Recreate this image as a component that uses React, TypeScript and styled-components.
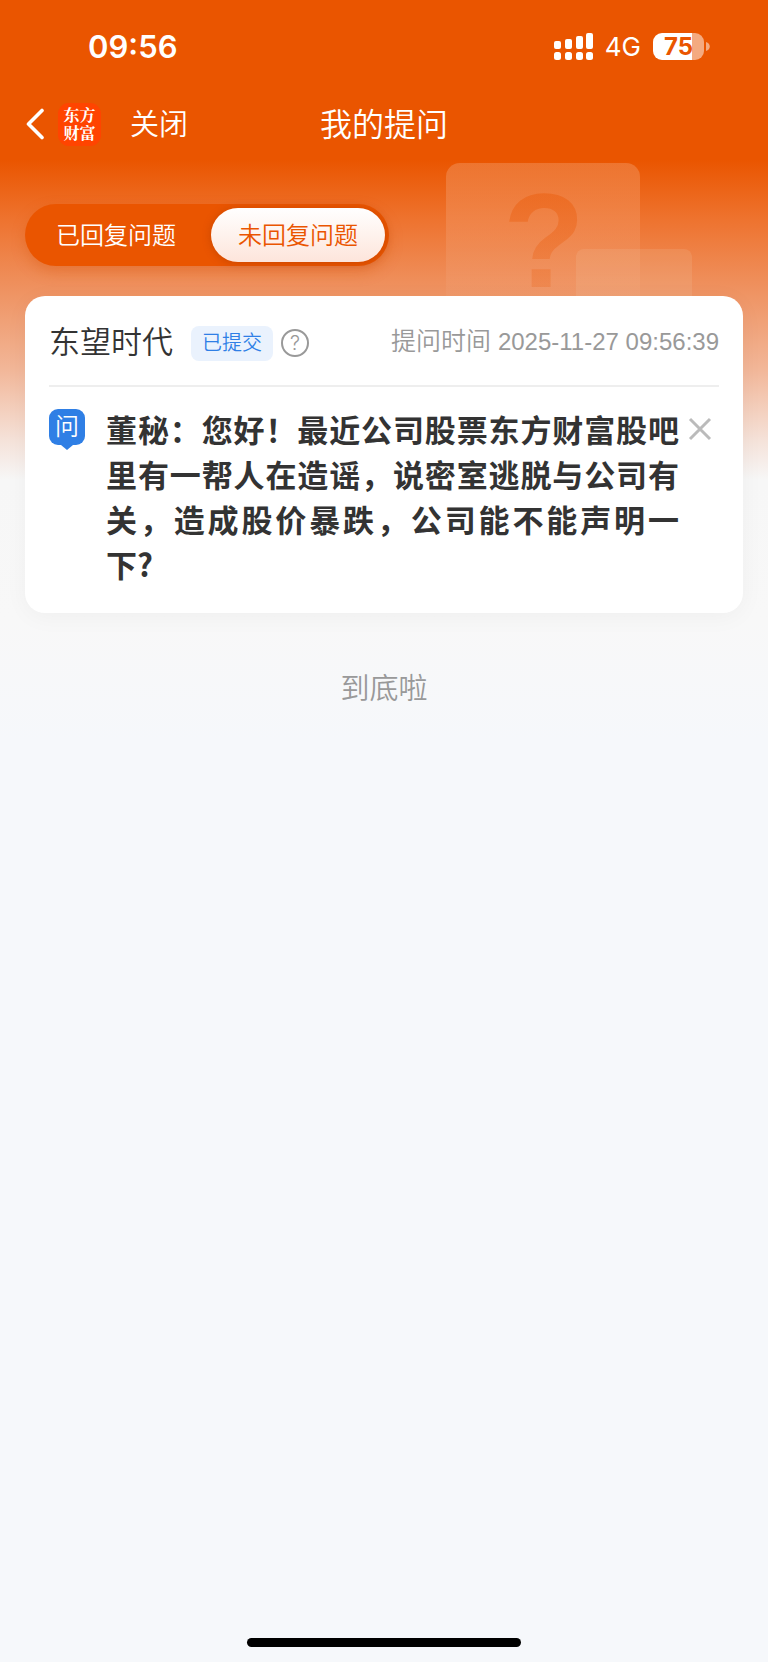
import React from "react";
import styled, { createGlobalStyle } from "styled-components";

const GlobalStyle = createGlobalStyle`
  *, *::before, *::after { box-sizing: border-box; }
  body {
    margin: 0;
    background: #f6f8fb;
    font-family: "Liberation Sans", "Noto Sans CJK SC", sans-serif;
    color: #333;
  }
  button { font: inherit; border: 0; padding: 0; background: none; cursor: pointer; }
  h1, h2, p { margin: 0; }
`;

const Page = styled.div`
  position: relative;
  display: flex;
  flex-direction: column;
  min-height: 100vh;
  font-weight: 350;
  background: #f6f8fb linear-gradient(
    180deg,
    #ea5500 0,
    #ea5500 160px,
    #ee732f 220px,
    #ef9565 296px,
    #f2b799 370px,
    #f5e2d9 440px,
    #f7f7f7 480px,
    #f8f8f8 620px,
    #f6f8fb 740px
  ) no-repeat;
`;

const Backdrop = styled.svg`
  position: absolute;
  top: 163px;
  left: 58%;
  width: 248px;
  height: 160px;
`;

const StatusBar = styled.div`
  display: flex;
  align-items: center;
  justify-content: space-between;
  height: 92px;
  padding: 0 58px 0 88px;
  color: #fff;
  font-family: Inter, sans-serif;
`;

const Clock = styled.time`
  font-size: 31px;
  font-weight: 600;
`;

const StatusIcons = styled.div`
  display: flex;
  align-items: center;
  gap: 12px;
`;

const Network = styled.span`
  font-size: 26px;
  font-weight: 400;
`;

const Battery = styled.div`
  display: flex;
  align-items: center;
  gap: 2px;
`;

const BatteryBody = styled.div`
  width: 51px;
  height: 27px;
  border-radius: 9px;
  text-align: center;
  font-size: 24px;
  font-weight: 700;
  line-height: 27px;
  color: #ea5500;
  background: linear-gradient(90deg, #fff 76%, #f4aa80 76%);
`;

const NavBar = styled.header`
  display: grid;
  grid-template-columns: 1fr auto 1fr;
  align-items: center;
  height: 64px;
  padding: 0 25px;
  color: #fff;
`;

const NavActions = styled.div`
  display: flex;
  align-items: center;
`;

const BackButton = styled.button`
  display: flex;
  margin-right: 13px;
`;

const Logo = styled.span`
  width: 43px;
  height: 43px;
  margin-right: 29px;
  padding: 3px 5px;
  border-radius: 11px;
  background: #ff4400;
  font-family: "Noto Serif CJK SC", "Noto Sans CJK SC", serif;
  font-size: 16px;
  font-weight: 700;
  line-height: 18px;
  text-align: center;
`;

const CloseLink = styled.button`
  padding-top: 2px;
  color: #fff;
  font-size: 29px;
  line-height: 40px;
`;

const Title = styled.h1`
  padding-top: 2px;
  font-size: 32px;
  font-weight: 350;
  line-height: 40px;
`;

const Main = styled.main`
  position: relative;
  display: flex;
  flex-direction: column;
  padding: 48px 25px 0;
`;

const Tabs = styled.div`
  display: flex;
  gap: 8px;
  align-self: flex-start;
  padding: 4px;
  border-radius: 31px;
  background: #ea5500;
  box-shadow: 0 6px 14px rgba(214, 84, 10, 0.35);
`;

const Tab = styled.button<{ $active?: boolean }>`
  width: 174px;
  height: 54px;
  padding-bottom: 3px;
  border-radius: 27px;
  font-size: 24px;
  color: ${(p) => (p.$active ? "#ea5500" : "#fff")};
  background: ${(p) => (p.$active ? "linear-gradient(180deg, #fff, #fde5db)" : "none")};
  box-shadow: ${(p) => (p.$active ? "0 1px 8px rgba(150, 50, 0, 0.4)" : "none")};
`;

const Card = styled.article`
  margin-top: 30px;
  padding: 0 24px 27px;
  border-radius: 20px;
  background: #fff;
  box-shadow: 0 4px 24px rgba(0, 0, 0, 0.04);
`;

const CardHeader = styled.div`
  display: flex;
  align-items: center;
  height: 91px;
  padding-top: 5px;
  border-bottom: 2px solid #eee;
`;

const Company = styled.h2`
  margin-right: 18px;
  font-size: 31px;
  font-weight: 350;
  line-height: 40px;
`;

const Tag = styled.span`
  width: 82px;
  height: 35px;
  border-radius: 8px;
  background: #eaf2fd;
  color: #2f7fe6;
  font-size: 20px;
  line-height: 34px;
  text-align: center;
`;

const HelpButton = styled.button`
  width: 28px;
  height: 28px;
  margin-left: 8px;
  border: 2px solid #999;
  border-radius: 50%;
  color: #999;
  font-family: Inter, sans-serif;
  font-size: 20px;
  line-height: 24px;
`;

const AskedAt = styled.span`
  margin-left: auto;
  padding-bottom: 8px;
  color: #999;
  font-size: 25px;
  white-space: nowrap;

  time { font-size: 24px; }
`;

const Question = styled.div`
  display: flex;
  align-items: flex-start;
  padding-top: 22px;
`;

const AskBadge = styled.span`
  position: relative;
  flex: none;
  width: 36px;
  height: 36px;
  margin-right: 21px;
  border-radius: 9px;
  background: #2f7fe5;
  color: #fff;
  font-size: 24px;
  line-height: 36px;
  text-align: center;

  &::after {
    content: "";
    position: absolute;
    top: 100%;
    left: 50%;
    margin-left: -6px;
    border: 6px solid transparent;
    border-top: 5px solid #2f7fe5;
    border-bottom: 0;
  }
`;

const QuestionText = styled.p`
  flex: 1;
  margin-top: -3px;
  font-family: "Noto Sans CJK SC", sans-serif;
  font-size: 31px;
  font-weight: 700;
  line-height: 45px;
  text-align: justify;
`;

const DismissButton = styled.button`
  display: flex;
  margin: 8px 7px 0 9px;
`;

const EndNote = styled.p`
  margin-top: 56px;
  color: #999;
  font-size: 29px;
  line-height: 40px;
  text-align: center;
`;

const HomeIndicator = styled.div`
  width: 274px;
  height: 9px;
  margin: auto auto 15px;
  border-radius: 5px;
  background: #000;
`;

const BARS = [
  { x: 0, y: 8 },
  { x: 11, y: 6 },
  { x: 22, y: 3 },
  { x: 32, y: 0 },
];

export default function App() {
  return (
    <Page>
      <GlobalStyle />
      <Backdrop viewBox="0 0 248 160" aria-hidden="true">
        <defs>
          <linearGradient id="tile" x1="0" y1="0" x2="0" y2="1">
            <stop offset="0" stopColor="#fff" stopOpacity="0.18" />
            <stop offset="0.75" stopColor="#fff" stopOpacity="0.03" />
          </linearGradient>
          <linearGradient id="mark" x1="0" y1="0" x2="0" y2="1">
            <stop offset="0" stopColor="#ea5500" stopOpacity="0.45" />
            <stop offset="1" stopColor="#ea5500" stopOpacity="0.15" />
          </linearGradient>
        </defs>
        <rect x="1" y="0" width="194" height="180" rx="14" fill="url(#tile)" />
        <text x="58" y="124" fontFamily="Liberation Sans" fontSize="134" fontWeight="700" fill="url(#mark)">?</text>
        <rect x="131" y="86" width="116" height="90" rx="8" fill="#f5d0b0" fillOpacity="0.16" />
      </Backdrop>

      <StatusBar>
        <Clock>09:56</Clock>
        <StatusIcons>
          <svg width="39" height="27" viewBox="0 0 39 27" fill="#fff" aria-hidden="true">
            {BARS.map((b) => (
              <React.Fragment key={b.x}>
                <rect x={b.x} y={b.y} width="7" height={16 - b.y} rx="2" />
                <rect x={b.x} y="19" width="7" height="8" rx="2.5" />
              </React.Fragment>
            ))}
          </svg>
          <Network>4G</Network>
          <Battery>
            <BatteryBody>75</BatteryBody>
            <svg width="4" height="9" viewBox="0 0 4 9" fill="#f4aa80" aria-hidden="true">
              <path d="M0 0C5 1.500 5 7.500 0 9Z" />
            </svg>
          </Battery>
        </StatusIcons>
      </StatusBar>

      <NavBar>
        <NavActions>
          <BackButton aria-label="返回">
            <svg width="20" height="32" viewBox="0 0 20 32" fill="none" stroke="#fff" strokeWidth="3.6" strokeLinecap="round" strokeLinejoin="round" aria-hidden="true">
              <path d="M17 2.500 3.500 16 17 29.500" />
            </svg>
          </BackButton>
          <Logo>东方财富</Logo>
          <CloseLink>关闭</CloseLink>
        </NavActions>
        <Title>我的提问</Title>
      </NavBar>

      <Main>
        <Tabs role="tablist">
          <Tab role="tab" aria-selected="false">已回复问题</Tab>
          <Tab role="tab" aria-selected="true" $active>未回复问题</Tab>
        </Tabs>

        <Card>
          <CardHeader>
            <Company>东望时代</Company>
            <Tag>已提交</Tag>
            <HelpButton>?</HelpButton>
            <AskedAt>提问时间 <time>2025-11-27 09:56:39</time></AskedAt>
          </CardHeader>
          <Question>
            <AskBadge>问</AskBadge>
            <QuestionText lang="zh-CN">
              董秘：您好！最近公司股票东方财富股吧里有一帮人在造谣，说密室逃脱与公司有关，造成股价暴跌，公司能不能声明一下?
            </QuestionText>
            <DismissButton aria-label="删除">
              <svg width="24" height="24" viewBox="0 0 24 24" fill="none" stroke="#bbb" strokeWidth="3" aria-hidden="true">
                <path d="M2 2 22 22M22 2 2 22" />
              </svg>
            </DismissButton>
          </Question>
        </Card>

        <EndNote>到底啦</EndNote>
      </Main>

      <HomeIndicator />
    </Page>
  );
}
